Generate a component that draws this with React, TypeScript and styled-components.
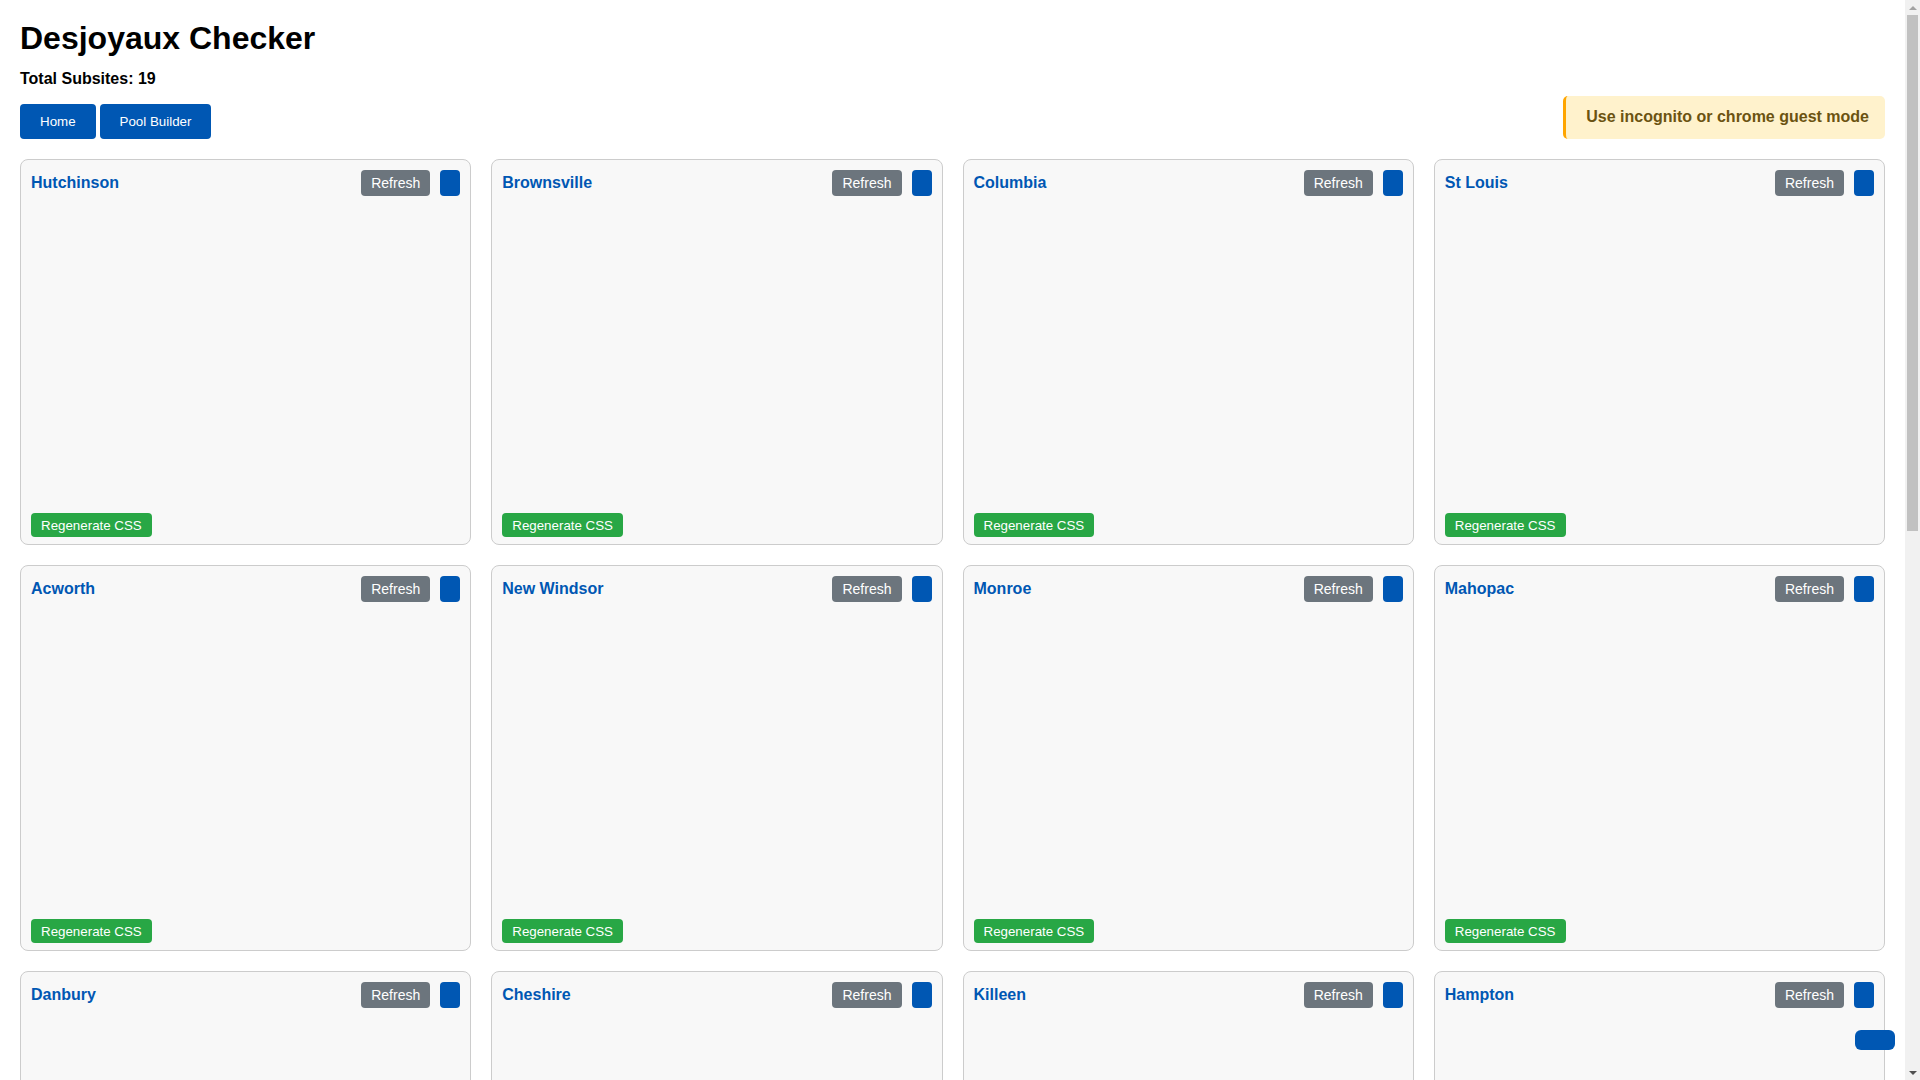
import React from 'react';
import styled, {createGlobalStyle} from 'styled-components';

const SUBSITES = [
  'Hutchinson',
  'Brownsville',
  'Columbia',
  'St Louis',
  'Acworth',
  'New Windsor',
  'Monroe',
  'Mahopac',
  'Danbury',
  'Cheshire',
  'Killeen',
  'Hampton',
  'Orlando',
  'Tampa',
  'Raleigh',
  'Dallas',
  'Phoenix',
  'Denver',
  'Austin',
];

const GlobalStyle = createGlobalStyle`
  body {
    margin: 0;
    background: #ffffff;
    font-family: "Liberation Sans", Arial, sans-serif;
    color: #000;
  }
`;

const Page = styled.div`
  box-sizing: border-box;
  width: calc(100vw - 15px);
  padding: 20px 20px 30px;
`;

const Header = styled.div`
  display: flex;
  justify-content: space-between;
  align-items: flex-end;
  margin-bottom: 20px;
`;

const Title = styled.h1`
  margin: 0 0 13px;
  font-size: 32px;
  font-weight: bold;
`;

const Count = styled.p`
  margin: 0 0 16px;
  font-size: 16px;
  font-weight: bold;
`;

const NavRow = styled.div`
  display: flex;
  gap: 4px;
`;

const NavButton = styled.button`
  height: 35px;
  padding: 0 20px;
  border: none;
  border-radius: 4px;
  background: #0057b3;
  color: #fff;
  font-family: "Liberation Sans", Arial, sans-serif;
  font-size: 13.33px;
  cursor: pointer;
`;

const Notice = styled.div`
  padding: 12px 16px 13px 20px;
  background: #fff2cc;
  border-left: 3px solid #ffa500;
  border-radius: 5px;
  color: #6b5311;
  font-size: 16px;
  font-weight: bold;
`;

const Grid = styled.div`
  display: grid;
  grid-template-columns: repeat(4, 1fr);
  gap: 20px;
`;

const Card = styled.div`
  box-sizing: border-box;
  height: 386px;
  display: flex;
  flex-direction: column;
  padding: 10px 10px 7px;
  background: #f8f8f8;
  border: 1px solid #cccccc;
  border-radius: 8px;
`;

const CardHead = styled.div`
  display: flex;
  align-items: center;
  gap: 10px;
  height: 26px;
`;

const CardName = styled.a`
  flex: 1;
  color: #0057b3;
  font-size: 16px;
  font-weight: bold;
  text-decoration: none;
`;

const SmallButton = styled.button<{$tone: 'gray' | 'blue' | 'green'}>`
  border: none;
  border-radius: 4px;
  color: #fff;
  font-family: "Liberation Sans", Arial, sans-serif;
  cursor: pointer;
  background: ${p =>
    p.$tone === 'gray' ? '#6c757d' : p.$tone === 'green' ? '#28a745' : '#0057b3'};
`;

const RefreshButton = styled(SmallButton)`
  height: 26px;
  padding: 0 10px;
  font-size: 14px;
`;

const OpenButton = styled(SmallButton)`
  width: 20px;
  height: 26px;
  padding: 0;
`;

const Frame = styled.div`
  flex: 1;
`;

const RegenButton = styled(SmallButton)`
  align-self: flex-start;
  height: 24px;
  padding: 0 10px;
  font-size: 13.33px;
`;

const TopButton = styled.button`
  position: fixed;
  right: 25px;
  bottom: 30px;
  width: 40px;
  height: 20px;
  border: none;
  border-radius: 6px;
  background: #0057b3;
  cursor: pointer;
`;

// the window scrollbar of the reference, drawn over the right edge
const ScrollTrack = styled.div`
  position: fixed;
  top: 0;
  right: 0;
  width: 15px;
  height: 100vh;
  display: flex;
  flex-direction: column;
  background: #f1f1f1;
`;

const ScrollArrow = styled.div<{$down?: boolean}>`
  height: 15px;
  display: flex;
  align-items: center;
  justify-content: center;

  &::after {
    content: '';
    border-left: 4px solid transparent;
    border-right: 4px solid transparent;
    ${p =>
      p.$down
        ? 'border-top: 4px solid #505050;'
        : 'border-bottom: 4px solid #a3a3a3;'}
  }
`;

const ScrollThumb = styled.div`
  height: 516px;
  margin: 0 2px;
  background: #c1c1c1;
`;

const ScrollRest = styled.div`
  flex: 1;
`;

export default function App() {
  return (
    <>
      <GlobalStyle />
      <Page>
        <Header>
          <div>
            <Title>Desjoyaux Checker</Title>
            <Count>Total Subsites: {SUBSITES.length}</Count>
            <NavRow>
              <NavButton>Home</NavButton>
              <NavButton>Pool Builder</NavButton>
            </NavRow>
          </div>
          <Notice>Use incognito or chrome guest mode</Notice>
        </Header>
        <Grid>
          {SUBSITES.map(name => (
            <Card key={name}>
              <CardHead>
                <CardName href="#">{name}</CardName>
                <RefreshButton $tone="gray">Refresh</RefreshButton>
                <OpenButton $tone="blue" />
              </CardHead>
              <Frame />
              <RegenButton $tone="green">Regenerate CSS</RegenButton>
            </Card>
          ))}
        </Grid>
      </Page>
      <TopButton />
      <ScrollTrack>
        <ScrollArrow />
        <ScrollThumb />
        <ScrollRest />
        <ScrollArrow $down />
      </ScrollTrack>
    </>
  );
}
